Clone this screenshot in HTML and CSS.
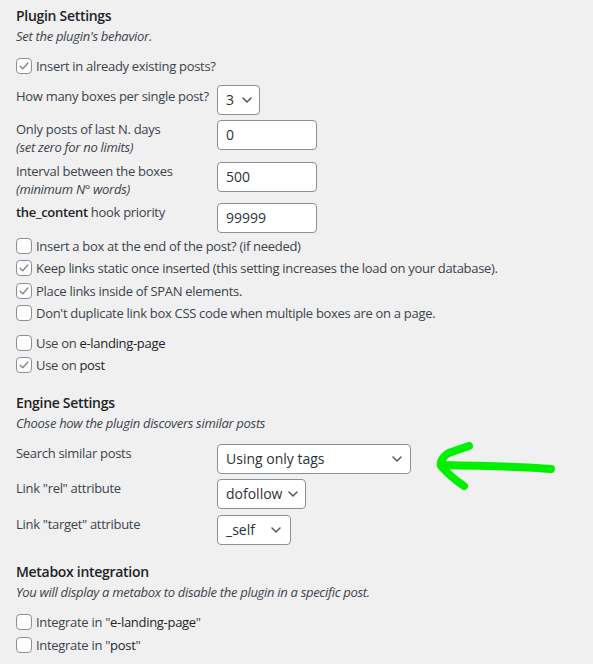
FILE: index.html
```html
<!DOCTYPE html>
<html>
<head>
<meta charset="utf-8">
<link rel="stylesheet" href="styles.css">
</head>
<body>
<div class="page">
  <section class="sec sec1">
    <h3 class="title">Plugin Settings</h3>
    <p class="desc">Set the plugin's behavior.</p>
    <label class="cb first"><span class="box checked"><svg viewBox="0 0 16 16"><path d="M3.5 8.2 L6.6 11.2 L12.4 4.6"/></svg></span>Insert in already existing posts?</label>
    <div class="form">
      <div class="lbl sel-lbl">How many boxes per single post?</div>
      <div class="field"><div class="select s-num"><span>3</span><svg class="chev" viewBox="0 0 10 6"><path d="M1 1 L5 5 L9 1"/></svg></div></div>
      <div class="lbl">Only posts of last N. days<br><em>(set zero for no limits)</em></div>
      <div class="field"><div class="input">0</div></div>
      <div class="lbl">Interval between the boxes<br><em>(minimum N° words)</em></div>
      <div class="field"><div class="input">500</div></div>
      <div class="lbl"><b>the_content</b> hook priority</div>
      <div class="field"><div class="input">99999</div></div>
    </div>
    <div class="cblist">
      <label class="cb"><span class="box"></span>Insert a box at the end of the post? (if needed)</label>
      <label class="cb"><span class="box checked"><svg viewBox="0 0 16 16"><path d="M3.5 8.2 L6.6 11.2 L12.4 4.6"/></svg></span>Keep links static once inserted (this setting increases the load on your database).</label>
      <label class="cb"><span class="box checked"><svg viewBox="0 0 16 16"><path d="M3.5 8.2 L6.6 11.2 L12.4 4.6"/></svg></span>Place links inside of SPAN elements.</label>
      <label class="cb"><span class="box"></span>Don't duplicate link box CSS code when multiple boxes are on a page.</label>
    </div>
    <div class="cblist types">
      <label class="cb"><span class="box"></span>Use on&nbsp;<strong class="em">e-landing-page</strong></label>
      <label class="cb"><span class="box checked"><svg viewBox="0 0 16 16"><path d="M3.5 8.2 L6.6 11.2 L12.4 4.6"/></svg></span>Use on&nbsp;<strong class="em">post</strong></label>
    </div>
  </section>

  <section class="sec sec2">
    <h3 class="title">Engine Settings</h3>
    <p class="desc">Choose how the plugin discovers similar posts</p>
    <div class="form form2">
      <div class="lbl">Search similar posts</div>
      <div class="field"><div class="select s-wide"><span>Using only tags</span><svg class="chev" viewBox="0 0 10 6"><path d="M1 1 L5 5 L9 1"/></svg></div></div>
      <div class="lbl">Link "rel" attribute</div>
      <div class="field"><div class="select s-rel"><span>dofollow</span><svg class="chev" viewBox="0 0 10 6"><path d="M1 1 L5 5 L9 1"/></svg></div></div>
      <div class="lbl">Link "target" attribute</div>
      <div class="field"><div class="select s-target"><span>_self</span><svg class="chev" viewBox="0 0 10 6"><path d="M1 1 L5 5 L9 1"/></svg></div></div>
    </div>
    <svg class="arrow" viewBox="0 0 130 60" width="130" height="60">
      <path d="M118 29 C 95 27, 60 26, 8 25 M36 6 C 28 9, 20 11, 14 14 C 9 18, 7 22, 8 26 C 14 33, 22 40, 31 46"/>
    </svg>
  </section>

  <section class="sec sec3">
    <h3 class="title">Metabox integration</h3>
    <p class="desc">You will display a metabox to disable the plugin in a specific post.</p>
    <div class="cblist meta">
      <label class="cb"><span class="box"></span>Integrate in "<strong class="em">e-landing-page</strong>"</label>
      <label class="cb"><span class="box"></span>Integrate in "<strong class="em">post</strong>"</label>
    </div>
  </section>
</div>
</body>
</html>
```

FILE: styles.css
```css
html, body {
  margin: 0;
  padding: 0;
  background: #f0f0f1;
}
body {
  font-family: "Open Sans", "Noto Sans", sans-serif;
  font-size: 13px;
  letter-spacing: -0.3px;
  color: #3c434a;
  line-height: 18px;
}
.page {
  padding: 7px 16px 0 16px;
}
.sec {
  position: relative;
}
.title {
  margin: 0;
  font-size: 14px;
  font-weight: 600;
  line-height: 18px;
  color: #1d2327;
}
.desc {
  margin: 2px 0 0 0;
  font-style: italic;
  line-height: 18px;
}
.cb {
  display: flex;
  align-items: center;
  height: 18px;
  white-space: nowrap;
}
.cb .em {
  font-weight: 500;
  color: #1d2327;
}
.first {
  margin-top: 12px;
}
.box {
  flex: none;
  box-sizing: border-box;
  width: 16px;
  height: 16px;
  border: 1px solid #8c8f94;
  border-radius: 4px;
  background: #fff;
  margin-right: 4px;
  display: flex;
  align-items: center;
  justify-content: center;
}
.box svg {
  width: 16px;
  height: 16px;
}
.box svg path {
  fill: none;
  stroke: #7e8993;
  stroke-width: 1.6;
  stroke-linecap: round;
  stroke-linejoin: round;
}
.form {
  display: grid;
  grid-template-columns: 201px auto;
  row-gap: 5px;
  margin-top: 10px;
}
.form > .lbl:nth-child(5) {
  margin-top: 1px;
}
.form > .field:nth-child(6) {
  margin-top: 1px;
}
.lbl {
  line-height: 18px;
  white-space: nowrap;
}
.sel-lbl {
  padding-top: 2px;
}
.lbl em { font-style: italic; }
.lbl b { font-weight: 600; color: #1d2327; }
.field {
  display: flex;
  align-items: flex-start;
}
.input, .select {
  box-sizing: border-box;
  height: 30px;
  background: #fff;
  border: 1px solid #8c8f94;
  border-radius: 4px;
  font-size: 14px;
  letter-spacing: 0;
  color: #2c3338;
  display: flex;
  align-items: center;
}
.input {
  width: 100px;
  padding: 0 8px;
}
.select {
  padding: 0 8px;
  justify-content: space-between;
}
.chev {
  width: 10px;
  height: 6px;
  flex: none;
}
.chev path {
  fill: none;
  stroke: #50575e;
  stroke-width: 1.5;
  stroke-linecap: round;
  stroke-linejoin: round;
}
.s-num { width: 43px; padding-right: 7px; }
.s-wide { width: 194px; padding-right: 8px; }
.s-rel { width: 89px; padding-right: 7px; }
.s-target { width: 74px; padding-right: 9px; }
.cblist {
  margin-top: 4px;
  display: flex;
  flex-direction: column;
  gap: 4.4px;
}
.cblist.types {
  margin-top: 12px;
  gap: 4px;
}
.sec2 {
  margin-top: 20px;
}
.form2 {
  margin-top: 12px;
  row-gap: 5px;
}
.arrow {
  position: absolute;
  left: 417px;
  top: 46px;
  overflow: visible;
}
.arrow path {
  fill: none;
  stroke: #00f000;
  stroke-width: 8;
  stroke-linecap: round;
  stroke-linejoin: round;
}
.sec3 {
  margin-top: 18px;
}
.cblist.meta {
  margin-top: 12px;
  gap: 5px;
}
```
